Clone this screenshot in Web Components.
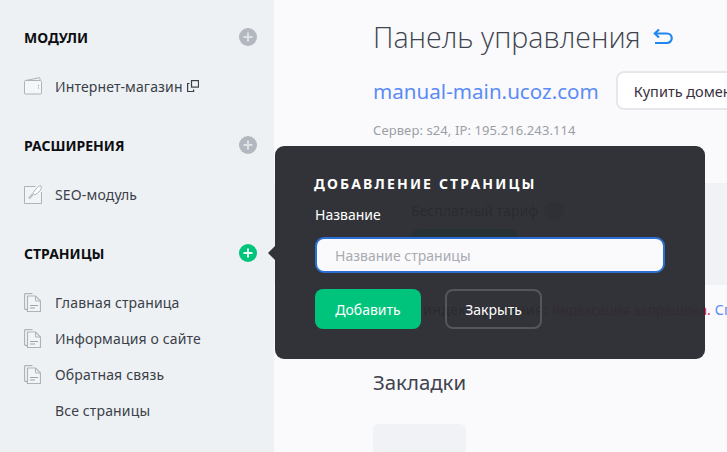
<!DOCTYPE html>
<html lang="ru">
<head>
<meta charset="utf-8">
<title>Панель управления</title>
<style>
  html, body { margin: 0; height: 100%; overflow: hidden; }
  body { font-family: "Noto Sans", "Open Sans", sans-serif; background: #fafafd; }
</style>
</head>
<body>
<cp-app>
  <cp-sidebar slot="side">
    <cp-section title="Модули">
      <cp-item icon="wallet" external>Интернет-магазин</cp-item>
    </cp-section>
    <cp-section title="Расширения">
      <cp-item icon="seo">SEO-модуль</cp-item>
    </cp-section>
    <cp-section title="Страницы" active>
      <cp-item icon="page">Главная страница</cp-item>
      <cp-item icon="page">Информация о сайте</cp-item>
      <cp-item icon="page">Обратная связь</cp-item>
      <cp-item>Все страницы</cp-item>
    </cp-section>
  </cp-sidebar>
  <cp-main slot="main"></cp-main>
  <cp-popover slot="over"></cp-popover>
</cp-app>

<script>
const ICONS = {
  wallet: `<svg width="19" height="18" viewBox="0 0 19 18" fill="none" stroke="#aeb3b9" stroke-width="1">
    <path d="M1.500 3.500 L15.500 .7 L16.500 3.500" />
    <rect x=".5" y="3.500" width="17" height="13.500" rx="1" fill="#f5f6f7"/>
    <path d="M14.500 8v1M14.500 10.500v1" stroke="#8f959b"/></svg>`,
  seo: `<svg width="19" height="19" viewBox="0 0 19 19" fill="none" stroke="#aeb3b9" stroke-width="1">
    <path d="M11.500 1.500H.5v17h17V7" fill="#f3f4f5"/>
    <path d="M17 .8c1 1.500 0 4-2.300 6.300L10.800 10 8.800 8l3-3.800C13.800 1.800 15.500.8 17 .8z" fill="#fff"/>
    <path d="M9 9 5 13.500" stroke="#bfc3c7" stroke-width="2.500"/></svg>`,
  page: `<svg width="17" height="19" viewBox="0 0 17 19" fill="none" stroke="#aeb3b9" stroke-width="1">
    <path d="M8.500 .5H2A1.500 1.500 0 0 0 .5 2v13A1.500 1.500 0 0 0 2 16.500h2" fill="#f3f4f5" stroke-width="1.300"/>
    <path d="M3.500 3h8l5 5v10.500h-13z" fill="#f3f4f5" stroke-width="1.200"/>
    <path d="M11.500 3v5h5" />
    <path d="M6 12.500h8M6 15h5" stroke="#9ea3a9"/></svg>`
};

class CpApp extends HTMLElement {
  constructor() {
    super();
    this.attachShadow({ mode: 'open' });
    this.shadowRoot.innerHTML = `
      <style>
        :host { display: flex; position: relative; width: 727px; height: 452px; overflow: hidden; }
        .side { flex: 0 0 274px; }
        .main { flex: 1; min-width: 0; }
      </style>
      <div class="side"><slot name="side"></slot></div>
      <div class="main"><slot name="main"></slot></div>
      <slot name="over"></slot>`;
  }
}

class CpSidebar extends HTMLElement {
  constructor() {
    super();
    this.attachShadow({ mode: 'open' });
    this.shadowRoot.innerHTML = `
      <style>
        :host { display: flex; flex-direction: column; gap: 38px; box-sizing: border-box; height: 452px;
                padding: 26px 17px 0 24px; background: #eef1f3; }
      </style>
      <slot></slot>`;
  }
}

class CpSection extends HTMLElement {
  constructor() {
    super();
    this.attachShadow({ mode: 'open' });
  }
  connectedCallback() {
    const on = this.hasAttribute('active');
    this.shadowRoot.innerHTML = `
      <style>
        :host { display: block; }
        .head { display: flex; align-items: center; justify-content: space-between; height: 22px; margin-bottom: 28px; }
        h3 { margin: 0; font-size: 14px; font-weight: 700; text-transform: uppercase; color: #0c0e12; }
        .plus { width: 18px; height: 18px; border-radius: 50%; background: ${on ? '#00c47c' : '#b3b7bf'}; }
        .plus svg { display: block; }
        .list { display: flex; flex-direction: column; gap: 16px; }
      </style>
      <div class="head">
        <h3>${this.getAttribute('title')}</h3>
        <div class="plus"><svg width="18" height="18" viewBox="0 0 18 18"><path d="M9 4.500v9M4.500 9h9" stroke="${on ? '#e9fff6' : '#dfe1e5'}" stroke-width="2"/></svg></div>
      </div>
      <div class="list"><slot></slot></div>`;
    this.removeAttribute('title');
  }
}

class CpItem extends HTMLElement {
  constructor() {
    super();
    this.attachShadow({ mode: 'open' });
  }
  connectedCallback() {
    const icon = ICONS[this.getAttribute('icon')] || '';
    const ext = this.hasAttribute('external') ? `<svg class="ext" width="12" height="12" viewBox="0 0 12 12" fill="none" stroke="#3c3f46" stroke-width="1.200">
        <rect x="4.500" y=".6" width="7" height="6.500"/><path d="M2.500 3.500H.6v8h6V9.500"/></svg>` : '';
    this.shadowRoot.innerHTML = `
      <style>
        :host { display: flex; align-items: center; height: 20px; font-size: 14px; color: #3a3f4a; }
        .ico { flex: 0 0 31px; display: flex; align-items: center; }
        .ext { margin-left: 4px; }
        span { letter-spacing: .15px; }
      </style>
      <div class="ico">${icon}</div><span><slot></slot></span>${ext}`;
  }
}

class CpMain extends HTMLElement {
  constructor() {
    super();
    this.attachShadow({ mode: 'open' });
    this.shadowRoot.innerHTML = `
      <style>
        :host { display: block; height: 452px; overflow: hidden; background: #fafafd; color: #1f2430; }
        .top { padding: 16px 0 0 99px; }
        h1 { display: flex; align-items: center; gap: 12px; margin: 0; height: 40px;
             font: 300 28.6px "Open Sans", sans-serif; color: #3f444d; white-space: nowrap; }
        .domain { display: flex; align-items: center; margin-top: 15px; gap: 17px; white-space: nowrap; }
        .domain a { font-size: 20.600px; color: #5b8bf5; text-decoration: none; }
        .buy { flex: none; box-sizing: border-box; height: 39px; width: 160px; padding: 0 0 0 16px; border: 2px solid #e6e7ea;
               border-radius: 8px; background: #fff; font: 14.5px "Noto Sans", sans-serif; color: #3a3040; text-align: left; white-space: nowrap; }
        .srv { margin: 11px 0 0; font-size: 13px; line-height: 18px; letter-spacing: .1px; color: #9b9ea4; }
        .band { margin-top: 44px; height: 102px; background: #f1f2f6; padding: 4px 0 0 99px; box-sizing: border-box; }
        .card { box-sizing: border-box; width: 292px; height: 94px; padding: 13px 0 0 37px; border: 1px solid #e9eaef; border-radius: 6px; }
        .tariff { display: flex; align-items: center; gap: 6px; font-size: 14px; line-height: 20px; }
        .tariff i { width: 20px; height: 20px; border-radius: 50%; background: #b3b7bf; }
        .pill { width: 107px; height: 30px; margin-top: 8px; border-radius: 8px; background: #00c47c; }
        .note { margin: 15px 0 0 99px; font-size: 14px; line-height: 20px; letter-spacing: .45px; white-space: nowrap; }
        .note b { font-weight: 400; letter-spacing: -.25px; color: #f0295a; }
        .note a { color: #5b8bf5; }
        h2 { margin: 48px 0 0 99px; font: 400 20.400px "Noto Sans", sans-serif; color: #3f444d; }
        .tile { width: 93px; height: 60px; margin: 28px 0 0 99px; border-radius: 6px; background: #f1f2f6; }
      </style>
      <div class="top">
        <h1>Панель управления
          <svg width="20" height="17" viewBox="0 0 20 17" fill="none" stroke="#1e88f0" stroke-width="2.200"><path d="M6 1.500 1.800 5.500 6 9.500"/><path d="M2 5.500h12a4.300 4.300 0 0 1 0 9.500H2"/></svg>
        </h1>
        <div class="domain"><a>manual-main.ucoz.com</a><button class="buy">Купить домен</button></div>
        <p class="srv">Сервер: s24, IP: 195.216.243.114</p>
      </div>
      <div class="band">
        <div class="card">
          <div class="tariff">Бесплатный тариф <i></i></div>
          <div class="pill"></div>
        </div>
      </div>
      <div class="note">Статус индексирования: <b>индексация запрещена.</b> <a>Сп</a></div>
      <h2>Закладки</h2>
      <div class="tile"></div>`;
  }
}

class CpPopover extends HTMLElement {
  constructor() {
    super();
    this.attachShadow({ mode: 'open' });
    this.shadowRoot.innerHTML = `
      <style>
        :host { display: block; position: absolute; left: 275px; top: 146px; width: 430px; height: 213px; box-sizing: border-box;
                padding: 29px 40px 0; border-radius: 9px; background: rgba(42,43,48,.96); color: #fff; }
        :host::before { content: ""; position: absolute; left: -7px; top: 100px; border: 7px solid transparent;
                        border-left-width: 0; border-right-color: #323338; }
        h4 { margin: 0 0 0 -1px; font-size: 14px; line-height: 18px; font-weight: 700; letter-spacing: 2.15px; text-transform: uppercase; }
        label { display: block; margin-top: 12px; font-size: 14px; line-height: 20px; }
        input { display: block; box-sizing: border-box; width: 350px; height: 36px; margin-top: 12px; padding: 0 18px;
                border: 2px solid #2a6fd4; border-radius: 9px; outline: 0; background: #fafafd;
                font: 14px "Noto Sans", sans-serif; color: #333; }
        input::placeholder { color: #a9abb0; opacity: 1; }
        .btns { display: flex; gap: 24px; margin-top: 16px; }
        button { box-sizing: border-box; height: 40px; border-radius: 8px; font: 14px "Noto Sans", sans-serif; color: #fff; cursor: pointer; }
        .add { width: 106px; border: 0; background: #00c47c; }
        .close { width: 97px; border: 2px solid #55565b; background: transparent; }
      </style>
      <h4>Добавление страницы</h4>
      <label for="n">Название</label>
      <input id="n" placeholder="Название страницы">
      <div class="btns"><button class="add">Добавить</button><button class="close">Закрыть</button></div>`;
  }
}

customElements.define('cp-app', CpApp);
customElements.define('cp-sidebar', CpSidebar);
customElements.define('cp-section', CpSection);
customElements.define('cp-item', CpItem);
customElements.define('cp-main', CpMain);
customElements.define('cp-popover', CpPopover);
</script>
</body>
</html>
